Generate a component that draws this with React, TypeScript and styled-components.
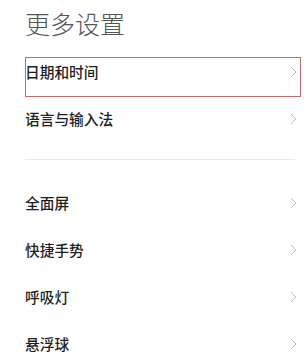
import React from 'react';
import styled, { createGlobalStyle } from 'styled-components';

const GlobalStyle = createGlobalStyle`
  html, body {
    margin: 0;
    padding: 0;
    background: #ffffff;
  }
  body {
    font-family: "Noto Sans CJK SC", "Noto Sans", sans-serif;
  }
`;

const Page = styled.div`
  width: 307px;
  height: 363px;
  overflow: hidden;
  padding: 0 7px 0 25px;
  box-sizing: border-box;
`;

const Title = styled.h1`
  margin: 0;
  padding-top: 6px;
  height: 42px;
  font-size: 25px;
  line-height: 35px;
  font-weight: 300;
  color: #555555;
`;

const Row = styled.div<{ $highlighted?: boolean }>`
  position: relative;
  height: 47px;
  display: flex;
  align-items: center;
  justify-content: space-between;
  padding-right: 3px;

  ${({ $highlighted }) =>
    $highlighted &&
    `
    &::after {
      content: '';
      position: absolute;
      top: 9px;
      left: 0;
      right: -1px;
      height: 40px;
      border: 1px solid #c96a66;
      box-sizing: border-box;
      pointer-events: none;
    }
  `}
`;

const Label = styled.span`
  font-size: 14.7px;
  font-weight: 500;
  color: #1f1f1f;
`;

const Divider = styled.div`
  height: 1px;
  background: #e8e8e8;
  margin: 17px 5px 19px 0;
`;

const Chevron: React.FC = () => (
  <svg width="7" height="12" viewBox="0 0 7 12">
    <polyline
      points="1,1 6,6 1,11"
      fill="none"
      stroke="#bbbbbb"
      strokeWidth="1"
    />
  </svg>
);

const groups: string[][] = [
  ['日期和时间', '语言与输入法'],
  ['全面屏', '快捷手势', '呼吸灯', '悬浮球'],
];

const App: React.FC = () => (
  <>
    <GlobalStyle />
    <Page>
      <Title>更多设置</Title>
      {groups.map((group, gi) => (
        <React.Fragment key={gi}>
          {gi > 0 && <Divider />}
          {group.map((label, i) => (
            <Row key={label} $highlighted={gi === 0 && i === 0}>
              <Label>{label}</Label>
              <Chevron />
            </Row>
          ))}
        </React.Fragment>
      ))}
    </Page>
  </>
);

export default App;
